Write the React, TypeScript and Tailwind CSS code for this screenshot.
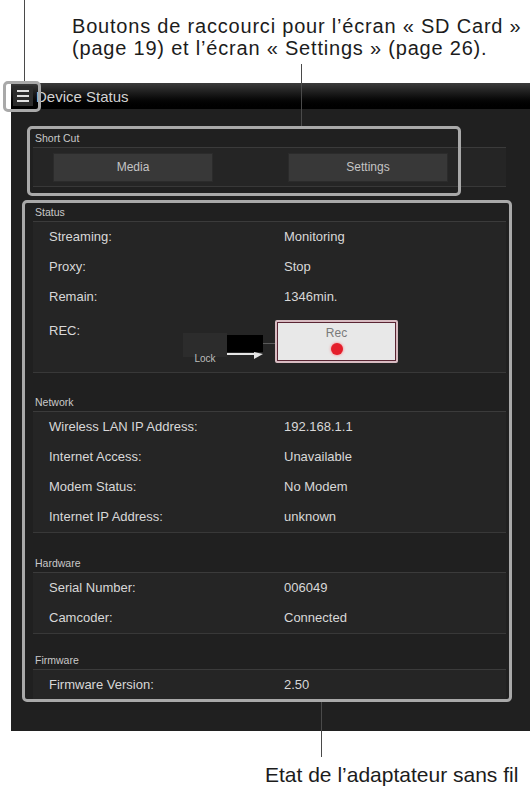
import type { ReactNode } from 'react';

type Row = { label: string; value: string };

const status: Row[] = [
    { label: 'Streaming:', value: 'Monitoring' },
    { label: 'Proxy:', value: 'Stop' },
    { label: 'Remain:', value: '1346min.' },
];

const network: Row[] = [
    { label: 'Wireless LAN IP Address:', value: '192.168.1.1' },
    { label: 'Internet Access:', value: 'Unavailable' },
    { label: 'Modem Status:', value: 'No Modem' },
    { label: 'Internet IP Address:', value: 'unknown' },
];

const hardware: Row[] = [
    { label: 'Serial Number:', value: '006049' },
    { label: 'Camcoder:', value: 'Connected' },
];

const firmware: Row[] = [{ label: 'Firmware Version:', value: '2.50' }];

function SectionHeader({ title, height }: { title: string; height: string }) {
    return (
        <div className={`${height} flex items-end pb-[3px] pl-[2px] border-b border-[#3b3b3b]`}>
            <span className="text-[10.5px] leading-[12px] text-[#c9c9c9]">{title}</span>
        </div>
    );
}

function InfoRow({ label, value }: Row) {
    return (
        <div className="h-[30px] flex items-center text-[13px] text-[#d8d8d8]">
            <span className="w-[251px] pl-[16px]">{label}</span>
            <span>{value}</span>
        </div>
    );
}

function Rows({ children }: { children: ReactNode }) {
    return <div className="bg-[#252525] border-b border-[#383838]">{children}</div>;
}

function RecRow() {
    return (
        <div className="h-[60px] flex items-start text-[13px] text-[#d8d8d8]">
            <span className="w-[150px] pl-[16px] pt-[9px]">REC:</span>
            {/* lock slider */}
            <div className="mt-[21px] flex flex-col items-center w-[44px]">
                <div className="w-[44px] h-[24px] bg-[#2c2c2c]" />
                <span className="-mt-[4px] text-[10px] leading-[12px] text-[#bdbdbd]">Lock</span>
            </div>
            <div className="mt-[23px] flex flex-col w-[36px]">
                <div className="h-[17px] bg-black" />
                <svg width="36" height="7" viewBox="0 0 36 7">
                    <rect x="0" y="1" width="30" height="2" fill="#e6e6e6" />
                    <polygon points="27,0 36,2 27,7" fill="#e6e6e6" />
                </svg>
            </div>
            <div className="mt-[31px] w-[12px] h-px bg-[#5a5a5a]" />
            <div className="mt-[8px] w-[123px] h-[43px] border-2 border-[#d8bcc2] rounded-[2px]">
                <div className="h-full border border-[#5a2533] bg-[#e8e8e8] flex flex-col items-center">
                    <span className="mt-[3px] text-[12px] leading-[14px] text-[#7a7a7a]">Rec</span>
                    <span className="mt-[3px] w-[12px] h-[12px] rounded-full bg-[#e41e2b] shadow-[0_0_3px_#ff6b73]" />
                </div>
            </div>
        </div>
    );
}

export default function App() {
    return (
        <div className="relative w-[532px] h-[793px] bg-white overflow-hidden font-['Liberation_Sans',Arial,sans-serif]">
            {/* top callout text */}
            <div className="pt-[15px] pl-[72px] text-[20px] leading-[22px] tracking-[0.8px] text-[#1c1c1c] whitespace-nowrap">
                <div>Boutons de raccourci pour l’écran « SD Card »</div>
                <div>(page 19) et l’écran « Settings » (page 26).</div>
            </div>

            {/* device screen */}
            <div className="ml-[11px] mt-[24px] w-[519px] h-[648px] bg-[#202020] flex flex-col">
                <div className="h-[26px] shrink-0 flex items-center bg-linear-to-b from-[#3c3c3c] via-[#121212] to-black">
                    <div className="ml-[2px] w-[20px] h-[20px] bg-[#2c2c2c] flex flex-col justify-center items-center gap-[3px]">
                        <span className="w-[12px] h-[2px] bg-[#e0e0e0]" />
                        <span className="w-[12px] h-[2px] bg-[#e0e0e0]" />
                        <span className="w-[12px] h-[2px] bg-[#e0e0e0]" />
                    </div>
                    <span className="ml-[3px] mt-[3px] text-[15px] text-[#d2d2d2]">Device Status</span>
                </div>

                <div className="ml-[22px] w-[473px]">
                    <SectionHeader title="Short Cut" height="h-[39px]" />
                    <div className="h-[39px] bg-[#252525] border-b border-[#383838] grid grid-cols-[235px_1fr] items-center">
                        <button className="ml-[20px] w-[160px] h-[29px] bg-[#383838] border border-[#2b2b2b] text-[12px] text-[#c4c4c4]">
                            Media
                        </button>
                        <button className="ml-[20px] w-[160px] h-[29px] bg-[#383838] border border-[#2b2b2b] text-[12px] text-[#c4c4c4]">
                            Settings
                        </button>
                    </div>

                    <SectionHeader title="Status" height="h-[35px]" />
                    <Rows>
                        {status.map(r => (
                            <InfoRow key={r.label} {...r} />
                        ))}
                        <RecRow />
                    </Rows>

                    <SectionHeader title="Network" height="h-[39px]" />
                    <Rows>
                        {network.map(r => (
                            <InfoRow key={r.label} {...r} />
                        ))}
                    </Rows>

                    <SectionHeader title="Hardware" height="h-[40px]" />
                    <Rows>
                        {hardware.map(r => (
                            <InfoRow key={r.label} {...r} />
                        ))}
                    </Rows>

                    <SectionHeader title="Firmware" height="h-[36px]" />
                    <Rows>
                        {firmware.map(r => (
                            <InfoRow key={r.label} {...r} />
                        ))}
                    </Rows>
                </div>
            </div>

            {/* bottom callout text */}
            <div className="mt-[34px] pl-[265px] text-[21px] leading-[19px] text-[#1c1c1c] whitespace-nowrap">
                Etat de l’adaptateur sans fil
            </div>

            {/* callout frames and leader lines */}
            <div className="absolute left-[24px] top-0 w-px h-[82px] bg-[#4a4a4a]" />
            <div className="absolute left-[3px] top-[81px] w-[38px] h-[31px] border-[3px] border-[#a9a9a9] rounded-[5px]" />
            <div className="absolute left-[301px] top-[64px] w-px h-[62px] bg-[#4a4a4a]" />
            <div className="absolute left-[27px] top-[126px] w-[434px] h-[70px] border-[3px] border-[#a9a9a9] rounded-[5px]" />
            <div className="absolute left-[22px] top-[200px] w-[490px] h-[502px] border-[3px] border-[#a9a9a9] rounded-[5px]" />
            <div className="absolute left-[321px] top-[702px] w-px h-[55px] bg-[#4a4a4a]" />
        </div>
    );
}
